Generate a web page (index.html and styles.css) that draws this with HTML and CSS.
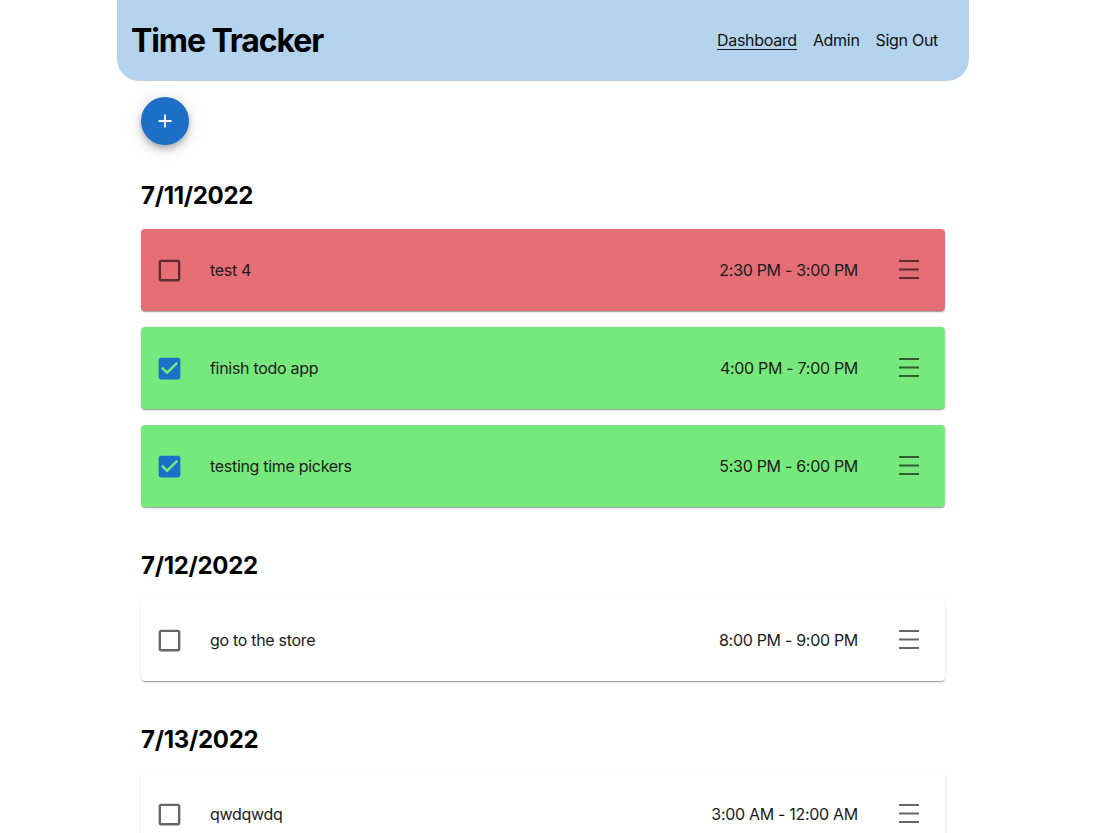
FILE: index.html
```html
<!DOCTYPE html>
<html lang="en">
<head>
<meta charset="utf-8">
<title>Time Tracker</title>
<link rel="stylesheet" href="styles.css">
</head>
<body>
<div class="page">
  <header class="header">
    <h1 class="title">Time Tracker</h1>
    <nav class="nav">
      <a class="nav-link active" href="#">Dashboard</a>
      <a class="nav-link" href="#">Admin</a>
      <a class="nav-link" href="#">Sign Out</a>
    </nav>
  </header>
  <main class="main">
    <button class="fab" aria-label="Add">
      <svg viewBox="0 0 24 24" width="24" height="24"><path d="M12 5.5v13M5.5 12h13" stroke="#fff" stroke-width="1.8" fill="none"/></svg>
    </button>

    <section class="day first">
      <h2 class="day-title">7/11/2022</h2>
      <div class="card late">
        <svg class="check" viewBox="0 0 24 24"><path d="M19 5v14H5V5h14m0-2H5c-1.1 0-2 .9-2 2v14c0 1.1.9 2 2 2h14c1.1 0 2-.9 2-2V5c0-1.1-.9-2-2-2z"/></svg>
        <span class="task">test 4</span>
        <span class="time">2:30 PM - 3:00 PM</span>
        <svg class="menu" viewBox="0 0 20 20"><path d="M0 1h20M0 9.5h20M0 18h20"/></svg>
      </div>
      <div class="card done">
        <svg class="check checked" viewBox="0 0 24 24"><path d="M19 3H5c-1.11 0-2 .9-2 2v14c0 1.1.89 2 2 2h14c1.11 0 2-.9 2-2V5c0-1.1-.89-2-2-2zm-9 14l-5-5 1.41-1.41L10 14.17l7.59-7.59L19 8l-9 9z"/></svg>
        <span class="task">finish todo app</span>
        <span class="time">4:00 PM - 7:00 PM</span>
        <svg class="menu" viewBox="0 0 20 20"><path d="M0 1h20M0 9.5h20M0 18h20"/></svg>
      </div>
      <div class="card done">
        <svg class="check checked" viewBox="0 0 24 24"><path d="M19 3H5c-1.11 0-2 .9-2 2v14c0 1.1.89 2 2 2h14c1.11 0 2-.9 2-2V5c0-1.1-.89-2-2-2zm-9 14l-5-5 1.41-1.41L10 14.17l7.59-7.59L19 8l-9 9z"/></svg>
        <span class="task">testing time pickers</span>
        <span class="time">5:30 PM - 6:00 PM</span>
        <svg class="menu" viewBox="0 0 20 20"><path d="M0 1h20M0 9.5h20M0 18h20"/></svg>
      </div>
    </section>

    <section class="day">
      <h2 class="day-title">7/12/2022</h2>
      <div class="card">
        <svg class="check" viewBox="0 0 24 24"><path d="M19 5v14H5V5h14m0-2H5c-1.1 0-2 .9-2 2v14c0 1.1.9 2 2 2h14c1.1 0 2-.9 2-2V5c0-1.1-.9-2-2-2z"/></svg>
        <span class="task">go to the store</span>
        <span class="time">8:00 PM - 9:00 PM</span>
        <svg class="menu" viewBox="0 0 20 20"><path d="M0 1h20M0 9.5h20M0 18h20"/></svg>
      </div>
    </section>

    <section class="day">
      <h2 class="day-title">7/13/2022</h2>
      <div class="card">
        <svg class="check" viewBox="0 0 24 24"><path d="M19 5v14H5V5h14m0-2H5c-1.1 0-2 .9-2 2v14c0 1.1.9 2 2 2h14c1.1 0 2-.9 2-2V5c0-1.1-.9-2-2-2z"/></svg>
        <span class="task">qwdqwdq</span>
        <span class="time">3:00 AM - 12:00 AM</span>
        <svg class="menu" viewBox="0 0 20 20"><path d="M0 1h20M0 9.5h20M0 18h20"/></svg>
      </div>
    </section>
  </main>
</div>
</body>
</html>
```

FILE: styles.css
```css
* { box-sizing: border-box; }

body {
  margin: 0;
  font-family: Inter, "Noto Sans", "Liberation Sans", sans-serif;
  color: #1b1b1b;
  background: #fff;
  letter-spacing: -0.3px;
}

.page {
  width: 852px;
  margin-left: 117px;
}

.header {
  height: 81px;
  background: #b3d3ee;
  border-radius: 0 0 22px 22px;
  display: flex;
  align-items: center;
  justify-content: space-between;
  padding: 0 31px 0 14px;
}

.title {
  margin: 0;
  font-size: 32px;
  font-weight: 700;
  color: #000;
  letter-spacing: -1.1px;
}

.nav {
  display: flex;
  gap: 16px;
  padding-bottom: 2px;
}

.nav-link {
  color: #111;
  text-decoration: none;
  font-size: 16px;
}

.nav-link.active { text-decoration: underline; text-underline-offset: 3px; }

.main {
  padding: 0 24px;
}

.fab {
  display: flex;
  align-items: center;
  justify-content: center;
  margin-top: 16px;
  width: 48px;
  height: 48px;
  border: none;
  border-radius: 50%;
  background: #1e6fc8;
  padding: 0;
  box-shadow: 0 3px 5px -1px rgba(0,0,0,.2), 0 6px 10px 0 rgba(0,0,0,.14), 0 1px 18px 0 rgba(0,0,0,.12);
}

.day { margin-top: 44px; }
.day.first { margin-top: 36px; }

.day-title {
  margin: 0 0 19px;
  font-size: 24px;
  line-height: 29px;
  font-weight: 700;
  color: #000;
}

.card {
  height: 82px;
  border-radius: 4px;
  background: #fff;
  box-shadow: 0 2px 1px -1px rgba(0,0,0,.2), 0 1px 1px 0 rgba(0,0,0,.14), 0 1px 3px 0 rgba(0,0,0,.12);
  display: flex;
  align-items: center;
  padding: 0 26px 0 14px;
  margin-bottom: 16px;
  font-size: 16px;
}

.card.late { background: #e56e76; }
.card.done { background: #77e97c; }

.check {
  width: 29px;
  height: 29px;
  fill: rgba(0,0,0,.6);
  flex: none;
}
.check.checked { fill: #1e6fc8; }

.task {
  margin-left: 26px;
  flex: 1;
}

.time {
  margin-right: 41px;
}

.menu {
  width: 20px;
  height: 20px;
  stroke: rgba(0,0,0,.6);
  stroke-width: 2;
  fill: none;
  flex: none;
}
```
